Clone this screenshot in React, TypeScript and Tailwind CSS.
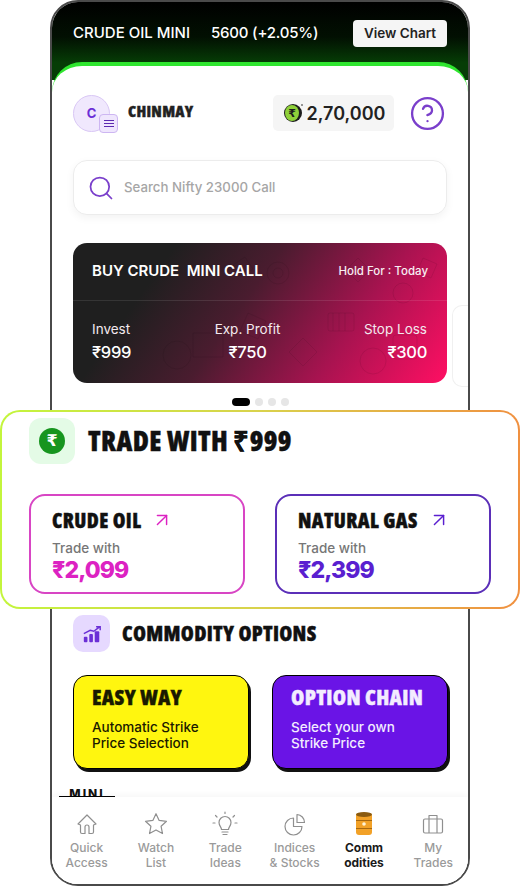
import { ArrowUpRight, HelpCircle, Search } from 'lucide-react';
import type { ReactNode } from 'react';

const headFont = "whitespace-nowrap font-['Open_Sans',sans-serif] font-extrabold [font-stretch:75%] [-webkit-text-stroke:0.4px_currentColor]";

function HomeIcon() {
  return (
    <svg viewBox="0 0 24 24" className="h-[24px] w-[24px]" fill="none" stroke="#8f8f8f" strokeWidth="1.2" strokeLinejoin="round">
      <path d="M3 12 12 3l9 9-2.500 1v7a1.500 1.500 0 0 1-1.500 1.500h-3V15a2 2 0 0 0-4 0v6.500H7A1.500 1.500 0 0 1 5.500 20v-7z" />
    </svg>
  );
}

function StarIcon() {
  return (
    <svg viewBox="0 0 24 24" className="h-[26px] w-[26px]" fill="none" stroke="#8f8f8f" strokeWidth="1.1" strokeLinejoin="round">
      <path d="m12 2.500 2.900 6.200 6.800.8-5 4.600 1.300 6.700-6-3.300-6 3.300 1.300-6.700-5-4.600 6.800-.8z" />
    </svg>
  );
}

function BulbIcon() {
  return (
    <svg viewBox="0 0 26 26" className="h-[26px] w-[26px]" fill="none" stroke="#8f8f8f" strokeWidth="1.2" strokeLinecap="round">
      <path d="M9.500 18.500c0-2.500-2.500-3.500-2.500-7a6 6 0 0 1 12 0c0 3.500-2.500 4.500-2.500 7z" />
      <path d="M10 21h6M11 23.500h4M13 1v1.500M3.500 4.500 5 6M22.500 4.500 21 6M1 12h2M23 12h2" />
    </svg>
  );
}

function PieIcon() {
  return (
    <svg viewBox="0 0 24 24" className="h-[24px] w-[24px]" fill="none" stroke="#8f8f8f" strokeWidth="1.2" strokeLinejoin="round">
      <path d="M10.500 6a8.500 8.500 0 1 0 8.500 8.500h-8.500z" />
      <path d="M14 2.500a8 8 0 0 1 7.500 8H14z" />
    </svg>
  );
}

function BarrelIcon() {
  return (
    <svg viewBox="0 0 24 26" className="h-[26px] w-[24px]">
      <rect x="4" y="2" width="16" height="22" rx="3" fill="#f2a127" />
      <ellipse cx="12" cy="3.500" rx="8" ry="2.500" fill="#8a5a10" />
      <path d="M4 9.500h16M4 17.500h16" stroke="#a8680f" strokeWidth="1.200" />
      <circle cx="12" cy="13" r="1.800" fill="#fff3d6" />
    </svg>
  );
}

function CaseIcon() {
  return (
    <svg viewBox="0 0 24 24" className="h-[24px] w-[24px]" fill="none" stroke="#8f8f8f" strokeWidth="1.2" strokeLinejoin="round">
      <rect x="2.500" y="7" width="19" height="14" rx="1.500" />
      <path d="M8 21V3.500h8V21" />
    </svg>
  );
}

function CoinIcon() {
  return (
    <svg viewBox="0 0 22 22" className="h-[22px] w-[22px]">
      <circle cx="11" cy="11" r="9" fill="#1d1d1d" />
      <ellipse cx="10" cy="11" rx="7" ry="8" fill="#8fd13a" />
      <text x="10" y="15" textAnchor="middle" fontSize="11" fontWeight="700" fill="#1d1d1d" fontFamily="DejaVu Sans">₹</text>
      <circle cx="20" cy="3" r="0.800" fill="#1d1d1d" />
    </svg>
  );
}

function ChartIcon() {
  return (
    <svg viewBox="0 0 22 20" className="h-[20px] w-[20px]">
      <rect x="2" y="13" width="4" height="6" rx="1" fill="#6b2fd6" />
      <rect x="8" y="10" width="4" height="9" rx="1" fill="#6b2fd6" />
      <rect x="14" y="7" width="5" height="12" rx="1" fill="#6b2fd6" />
      <path d="M2 9.500 9 6l4 1 6-4.500M15.500 2H20v4" fill="none" stroke="#6b2fd6" strokeWidth="1.600" />
    </svg>
  );
}

// faint doodles printed over the gradient of the offer card
function CardDoodles() {
  return (
    <svg viewBox="0 0 374 140" className="absolute inset-0 h-full w-full" fill="none" stroke="rgba(0,0,0,0.08)" strokeWidth="1">
      <circle cx="205" cy="30" r="11" />
      <circle cx="205" cy="30" r="5" />
      <rect x="255" y="70" width="26" height="18" rx="2" />
      <path d="M260 70v18M266 70v18M272 70v18" />
      <path d="m285 15 12 12-12 12-12-12z" />
      <circle cx="330" cy="50" r="10" />
      <rect x="320" y="92" width="24" height="24" rx="3" />
      <path d="m230 95 14 14-14 14-14-14zM120 90h30v24h-30zM90 112a14 14 0 1 0 28 0 14 14 0 1 0-28 0" />
      <circle cx="300" cy="118" r="13" />
      <path d="M175 70l18 8-8 18-18-8zM350 15l14 6-6 14-14-6zM160 22l12-8 8 12-12 8z" />
    </svg>
  );
}

function Stat({ label, value, align }: { label: string; value: string; align: string }) {
  return (
    <div className={`flex flex-col ${align}`}>
      <span className="text-[13.500px] leading-[20px] text-[#f3e9ee]">{label}</span>
      <span className="mt-[2px] text-[16.500px] font-medium leading-[22px] tracking-[-0.3px] text-white">{value}</span>
    </div>
  );
}

function TradeCard({ title, price, border, color }: { title: string; price: string; border: string; color: string }) {
  return (
    <div className={`h-[100px] w-[216px] rounded-[16px] border-2 bg-white pl-[21px] pt-[11px] ${border}`}>
      <div className="flex items-center gap-[10px]">
        <span className={`text-[20.500px] leading-[26px] tracking-[0.4px] text-[#111] ${headFont}`}>{title}</span>
        <ArrowUpRight className={`h-[22px] w-[22px] ${color}`} strokeWidth={1.6} />
      </div>
      <div className="mt-[6px] text-[13.500px] font-medium leading-[18px] text-[#767676]">Trade with</div>
      <div className={`text-[23px] font-extrabold leading-[26px] tracking-[-0.9px] ${color}`}>{price}</div>
    </div>
  );
}

function OptionCard({ title, lines, className }: { title: string; lines: string[]; className: string }) {
  return (
    <div className={`h-[94px] w-[176px] rounded-[14px] border-[1.5px] border-black pl-[18px] pt-[7px] shadow-[2px_3px_0_#111] ${className}`}>
      <div className={`text-[21.500px] leading-[27px] tracking-[0.3px] ${headFont}`}>{title}</div>
      <div className="mt-[9px] text-[13.500px] font-medium leading-[16px]">
        {lines.map((l) => (
          <div key={l}>{l}</div>
        ))}
      </div>
    </div>
  );
}

function NavItem({ icon, top, bottom, active }: { icon: ReactNode; top: string; bottom: string; active?: boolean }) {
  return (
    <div className="flex flex-1 flex-col items-center">
      <div className="flex h-[28px] items-center">{icon}</div>
      <div className={`mt-[2px] text-center text-[12px] leading-[15px] ${active ? 'font-bold text-[#1a1a1a]' : 'font-medium text-[#9a9a9a]'}`}>
        <div>{top}</div>
        <div>{bottom}</div>
      </div>
    </div>
  );
}

export default function App() {
  return (
    <div className="h-[888px] w-[520px] overflow-hidden bg-white font-['Inter','Noto_Sans',sans-serif]">
      <div className="mx-[50px] h-[886px] rounded-[28px] border-2 border-[#4a4a4a] bg-white">
        <div className="h-[78px] rounded-t-[26px] bg-[linear-gradient(180deg,#000_0%,#021002_45%,#063d06_78%,#063d06_100%)] pt-[18px]">
          <div className="flex h-[27px] items-center px-[21px]">
            <span className="text-[15px] font-medium text-white">CRUDE OIL MINI</span>
            <span className="ml-[21px] text-[15px] font-medium tracking-[-0.2px] text-white">5600 (+2.05%)</span>
            <button className="ml-auto flex h-[27px] w-[94px] items-center justify-center rounded-[4px] bg-[#f5f5f5] text-[13.500px] font-semibold text-[#222]">View Chart</button>
          </div>
        </div>

        <div className="relative -mt-[18px] h-[822px] overflow-hidden rounded-b-[26px] rounded-t-[30px] border-t-4 border-[#2fe62f] bg-white">
          <div className="mt-[25px] flex h-[44px] items-center pl-[21px] pr-[22px]">
            <div className="relative h-[37px] w-[37px] rounded-full border border-[#d9c7f5] bg-[#f0e8fd] text-center text-[13px] font-bold leading-[35px] text-[#6b2fd6]">
              C
              <div className="absolute -bottom-[2px] -right-[9px] flex h-[19px] w-[19px] flex-col items-center justify-center gap-[2px] rounded-[4px] border border-[#cdb6f2] bg-[#efe6fd]">
                <span className="h-px w-[10px] bg-[#5c2ab0]" />
                <span className="h-px w-[10px] bg-[#5c2ab0]" />
                <span className="h-px w-[10px] bg-[#5c2ab0]" />
              </div>
            </div>
            <span className={`ml-[18px] -mt-[4px] text-[16px] leading-[20px] tracking-[0.3px] text-[#222] ${headFont}`}>CHINMAY</span>
            <div className="ml-auto flex h-[36px] w-[121px] items-center justify-center gap-[3px] rounded-[5px] bg-[#f5f5f5]">
              <CoinIcon />
              <span className="text-[18px] font-semibold text-[#222]">2,70,000</span>
            </div>
            <HelpCircle className="ml-[15px] h-[37px] w-[37px] text-[#7a3fcb]" strokeWidth={1.5} />
          </div>

          <div className="mx-[21px] mt-[25px] flex h-[55px] items-center rounded-[14px] border border-[#ececec] bg-white pl-[13px] shadow-[0_3px_8px_rgba(0,0,0,0.05)]">
            <Search className="h-[28px] w-[28px] text-[#7a3fcb]" strokeWidth={1.5} />
            <span className="ml-[9px] text-[13.250px] font-medium text-[#a6a6a6]">Search Nifty 23000 Call</span>
          </div>

          <div className="relative mt-[28px]">
            <div className="relative mx-[21px] h-[140px] overflow-hidden rounded-[14px] bg-[linear-gradient(125deg,#1f1f1f_22%,#4a1c2f_45%,#a81350_72%,#ff0f63_100%)]">
              <CardDoodles />
              <div className="relative flex h-[58px] items-center justify-between border-b border-white/10 px-[19px]">
                <span className="whitespace-pre text-[15px] font-semibold text-white">BUY CRUDE  MINI CALL</span>
                <span className="text-[11.500px] font-medium text-[#f7eef2]">Hold For : Today</span>
              </div>
              <div className="relative flex justify-between px-[19px] pr-[20px] pt-[18px]">
                <Stat label="Invest" value="₹999" align="items-start" />
                <Stat label="Exp. Profit" value="₹750" align="items-center" />
                <Stat label="Stop Loss" value="₹300" align="items-end" />
              </div>
            </div>
            <div className="absolute bottom-[-4px] right-0 h-[82px] w-[16px] rounded-l-[10px] border border-r-0 border-[#f0f0f0]" />
          </div>

          <div className="mt-[15px] flex items-center gap-[5px] pl-[180px]">
            <span className="h-[8px] w-[18px] rounded-full bg-black" />
            <span className="h-[8px] w-[8px] rounded-full bg-[#e6e6e6]" />
            <span className="h-[8px] w-[8px] rounded-full bg-[#e6e6e6]" />
            <span className="h-[8px] w-[8px] rounded-full bg-[#e6e6e6]" />
          </div>

          <div className="mt-[209px] flex h-[37px] items-center pl-[21px]">
            <div className="flex h-[37px] w-[37px] items-center justify-center rounded-[10px] bg-[#e6d9ff]">
              <ChartIcon />
            </div>
            <span className={`ml-[12px] text-[21px] tracking-[0.3px] text-[#111] ${headFont}`}>COMMODITY OPTIONS</span>
          </div>

          <div className="mt-[23px] flex gap-[23px] pl-[21px]">
            <OptionCard title="EASY WAY" lines={['Automatic Strike', 'Price Selection']} className="bg-[#fff60f] text-[#1a1a00]" />
            <OptionCard title="OPTION CHAIN" lines={['Select your own', 'Strike Price']} className="bg-[#6a14e6] text-[#f3ecff]" />
          </div>

          <div className="ml-[7px] mt-[20px] w-[56px] border-b-2 border-black">
            <div className="h-[7px] overflow-hidden text-center text-[12px] font-extrabold leading-[9px] tracking-[2px] text-[#111]">MINI</div>
          </div>

          <div className="absolute inset-x-0 bottom-0 flex h-[87px] bg-white pt-[13px] shadow-[0_-2px_6px_rgba(0,0,0,0.04)]">
            <NavItem icon={<HomeIcon />} top="Quick" bottom="Access" />
            <NavItem icon={<StarIcon />} top="Watch" bottom="List" />
            <NavItem icon={<BulbIcon />} top="Trade" bottom="Ideas" />
            <NavItem icon={<PieIcon />} top="Indices" bottom="& Stocks" />
            <NavItem icon={<BarrelIcon />} top="Comm" bottom="odities" active />
            <NavItem icon={<CaseIcon />} top="My" bottom="Trades" />
          </div>
        </div>
      </div>

      <div className="relative -mt-[476px] h-[199px] rounded-[20px] bg-[linear-gradient(90deg,#c3f53c_0%,#d9d24c_50%,#f09040_100%)] p-[2px]">
        <div className="h-full rounded-[18px] bg-white pl-[27px] pt-[6px]">
          <div className="flex h-[46px] items-center">
            <div className="flex h-[46px] w-[46px] items-center justify-center rounded-[12px] bg-[#e4fbe6]">
              <span className="flex h-[26px] w-[26px] items-center justify-center rounded-full bg-[#17951f] font-['DejaVu_Sans'] text-[16px] font-bold text-white">₹</span>
            </div>
            <span className={`ml-[13px] text-[27.500px] tracking-[0.4px] text-[#111] ${headFont}`}>TRADE WITH ₹999</span>
          </div>
          <div className="mt-[30px] flex gap-[30px]">
            <TradeCard title="CRUDE OIL" price="₹2,099" border="border-[#d845c4]" color="text-[#dc22c2]" />
            <TradeCard title="NATURAL GAS" price="₹2,399" border="border-[#5b2fb8]" color="text-[#5a1fd0]" />
          </div>
        </div>
      </div>
    </div>
  );
}
